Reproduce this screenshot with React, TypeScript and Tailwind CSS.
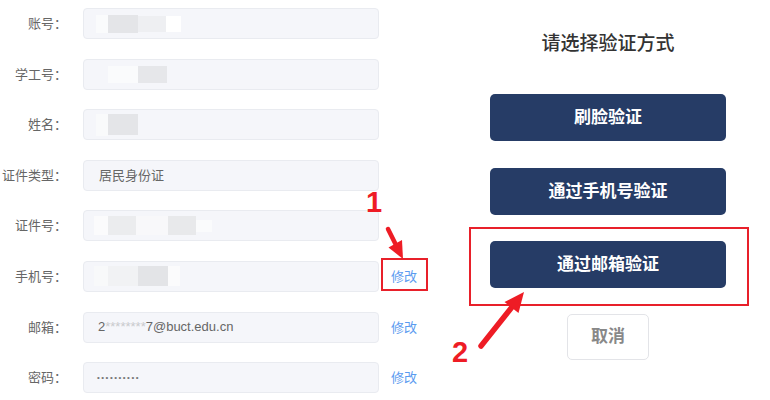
import React from "react";

type Block = { ml: number; w: number; h: number; c: string };

const FONT = { fontFamily: '"Liberation Sans", "Noto Sans CJK SC", sans-serif' };

function Blur({ blocks }: { blocks: Block[] }) {
  return (
    <div className="flex items-center pl-[10px] blur-[0.6px]">
      {blocks.map((b, i) => (
        <div
          key={i}
          style={{ marginLeft: b.ml, width: b.w, height: b.h, background: b.c }}
        />
      ))}
    </div>
  );
}

type Row = { label: string; content: React.ReactNode; edit?: boolean };

const rows: Row[] = [
  {
    label: "账号：",
    content: (
      <Blur
        blocks={[
          { ml: 2, w: 12, h: 18, c: "#fafbfc" },
          { ml: 0, w: 30, h: 18, c: "#e4e5e8" },
          { ml: 0, w: 28, h: 16, c: "#eeeff2" },
          { ml: 0, w: 15, h: 16, c: "#ffffff" },
        ]}
      />
    ),
  },
  {
    label: "学工号：",
    content: (
      <Blur
        blocks={[
          { ml: 14, w: 30, h: 17, c: "#fafbfc" },
          { ml: 0, w: 29, h: 17, c: "#e6e7ea" },
        ]}
      />
    ),
  },
  {
    label: "姓名：",
    content: (
      <Blur
        blocks={[
          { ml: 2, w: 12, h: 22, c: "#f9fafb" },
          { ml: 0, w: 30, h: 21, c: "#e4e5e8" },
        ]}
      />
    ),
  },
  {
    label: "证件类型：",
    content: <span className="pl-[15px] text-[13px] text-[#666]">居民身份证</span>,
  },
  {
    label: "证件号：",
    content: (
      <Blur
        blocks={[
          { ml: 0, w: 14, h: 19, c: "#fbfbfc" },
          { ml: 0, w: 28, h: 19, c: "#ebecee" },
          { ml: 0, w: 32, h: 19, c: "#f8f8fa" },
          { ml: 0, w: 28, h: 19, c: "#e8e9eb" },
          { ml: 0, w: 16, h: 12, c: "#fafbfc" },
        ]}
      />
    ),
  },
  {
    label: "手机号：",
    content: (
      <Blur
        blocks={[
          { ml: 0, w: 14, h: 20, c: "#f8f9fa" },
          { ml: 0, w: 30, h: 20, c: "#f1f2f4" },
          { ml: 0, w: 30, h: 20, c: "#e3e4e7" },
          { ml: 0, w: 12, h: 20, c: "#fbfbfc" },
        ]}
      />
    ),
    edit: true,
  },
  {
    label: "邮箱：",
    content: (
      <span className="pl-[14px] text-[13px] text-[#666]">
        2<span className="text-[#c9cacd]">********</span>7@buct.edu.cn
      </span>
    ),
    edit: true,
  },
  {
    label: "密码：",
    content: (
      <span className="pl-[13px] text-[8px] tracking-[1.5px] text-[#777]">••••••••••</span>
    ),
    edit: true,
  },
];

export default function App() {
  return (
    <div className="relative w-[770px] h-[400px] bg-white overflow-hidden" style={FONT}>
      <div className="flex">
        {/* left form */}
        <div className="w-[440px] pt-[8px] flex flex-col gap-[19.6px]">
          {rows.map((r) => (
            <div key={r.label} className="flex items-center h-[31px]">
              <div className="w-[67px] text-right text-[13px] text-[#666] leading-[31px] whitespace-nowrap">
                {r.label}
              </div>
              <div className="ml-[16px] w-[296px] h-[31px] flex items-center rounded-[4px] border border-[#e9ebf0] bg-[#f5f6fa]">
                {r.content}
              </div>
              {r.edit && (
                <span className="ml-[12px] text-[13px] text-[#5b9bf0] leading-[31px]">修改</span>
              )}
            </div>
          ))}
        </div>

        {/* right panel */}
        <div className="ml-[50px] w-[236px] pt-[30px] flex flex-col items-center">
          <div className="text-[19px] leading-[28px] font-medium text-[#333]">请选择验证方式</div>
          <button className="mt-[36px] w-[236px] h-[47px] rounded-[5px] bg-[#263c66] text-white text-[17px] font-bold">
            刷脸验证
          </button>
          <button className="mt-[27px] w-[236px] h-[47px] rounded-[5px] bg-[#263c66] text-white text-[17px] font-bold">
            通过手机号验证
          </button>
          <button className="mt-[26px] w-[236px] h-[47px] rounded-[5px] bg-[#263c66] text-white text-[17px] font-bold">
            通过邮箱验证
          </button>
          <button className="mt-[26px] w-[82px] h-[46px] rounded-[5px] border border-[#e3e4e8] bg-white text-[#888] text-[17px] font-bold">
            取消
          </button>
        </div>
      </div>

      {/* annotations */}
      <svg
        className="absolute inset-0 pointer-events-none"
        width="770"
        height="400"
        viewBox="0 0 770 400"
      >
        <rect x="382" y="259" width="45" height="31" fill="none" stroke="#e8202a" strokeWidth="2" />
        <rect x="470" y="228" width="278" height="77" fill="none" stroke="#e8202a" strokeWidth="2" />
        <line x1="388" y1="229" x2="396" y2="245" stroke="#ee1c25" strokeWidth="4.5" strokeLinecap="round" />
        <polygon points="403,259 402,240 388.5,247.5" fill="#ee1c25" />
        <line x1="481" y1="346" x2="512" y2="307" stroke="#ee1c25" strokeWidth="5.5" strokeLinecap="round" />
        <polygon points="524,292 518.5,313 504.5,302" fill="#ee1c25" />
      </svg>
      <span className="absolute left-[366px] top-[186px] text-[29px] leading-[32px] font-bold text-[#ee1c25]">
        1
      </span>
      <span className="absolute left-[452px] top-[336px] text-[29px] leading-[32px] font-bold text-[#ee1c25]">
        2
      </span>
    </div>
  );
}
